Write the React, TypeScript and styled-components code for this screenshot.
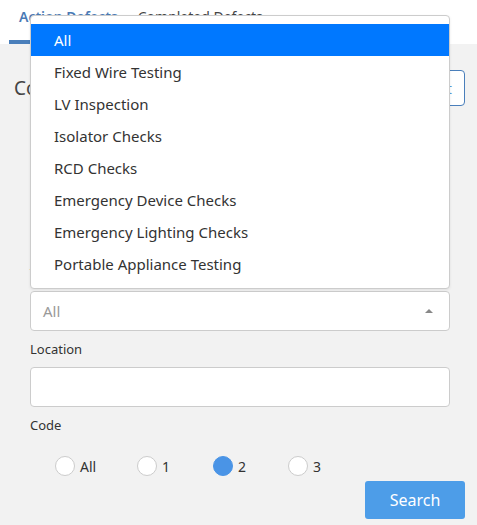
import React from "react";
import styled, { createGlobalStyle } from "styled-components";

const Global = createGlobalStyle`
  html, body { margin: 0; padding: 0; }
  body {
    background: #f2f2f2;
    font-family: "Noto Sans", "Open Sans", sans-serif;
    color: #333;
  }
  * { box-sizing: border-box; }
`;

const Page = styled.div`
  position: relative;
  width: 477px;
  min-height: 525px;
  background: #f2f2f2;
`;

const TabBar = styled.div`
  display: flex;
  height: 44px;
  background: #fff;
  padding-left: 9px;
`;

const Tab = styled.div<{ $active?: boolean }>`
  padding: 7px 10px 0;
  font-size: 14px;
  line-height: 20px;
  font-weight: ${(p) => (p.$active ? 600 : 400)};
  color: ${(p) => (p.$active ? "#4a7ab5" : "#444")};
  border-bottom: 4px solid ${(p) => (p.$active ? "#4a7fbb" : "transparent")};
`;

const Content = styled.div`
  padding: 26px 12px 0 14px;
`;

const HeaderRow = styled.div`
  display: flex;
  align-items: center;
  justify-content: space-between;
  height: 36px;
  margin-bottom: 5px;
`;

const Heading = styled.h2`
  margin: 0;
  font-size: 19px;
  font-weight: 400;
  color: #444;
`;

const OutlineButton = styled.button`
  height: 36px;
  padding: 0 12px;
  border: 1px solid #4a7fbb;
  border-radius: 4px;
  background: #fff;
  color: #5b9bd5;
  font-family: inherit;
  font-size: 15px;
`;

const Form = styled.div`
  display: flex;
  flex-direction: column;
  padding: 0 15px 0 16px;
`;

const Field = styled.div`
  display: flex;
  flex-direction: column;
  margin-bottom: 8px;
`;

const Label = styled.label`
  font-size: 13px;
  line-height: 20px;
  color: #333;
  margin-bottom: 8px;
`;

const Input = styled.div`
  height: 40px;
  background: #fff;
  border: 1px solid #ccc;
  border-radius: 4px;
`;

const SelectBox = styled.div`
  display: flex;
  align-items: center;
  justify-content: space-between;
  height: 40px;
  padding: 0 16px 0 12px;
  background: #fff;
  border: 1px solid #ccc;
  border-radius: 4px;
  font-size: 15px;
  color: #999;
`;

const Caret = styled.span`
  width: 0;
  height: 0;
  border-left: 4px solid transparent;
  border-right: 4px solid transparent;
  border-bottom: 4px solid #888;
`;

const RadioRow = styled.div`
  display: grid;
  grid-template-columns: 82px 76px 75px auto;
  padding-left: 25px;
  margin-top: 13px;
`;

const RadioItem = styled.div`
  display: flex;
  align-items: center;
  gap: 5px;
  font-size: 14px;
  color: #333;
  height: 20px;
`;

const RadioCircle = styled.span<{ $checked?: boolean }>`
  width: 20px;
  height: 20px;
  border-radius: 50%;
  background: ${(p) => (p.$checked ? "#4a94e6" : "#fff")};
  border: 1px solid ${(p) => (p.$checked ? "#4a94e6" : "#ccc")};
`;

const Actions = styled.div`
  display: flex;
  justify-content: flex-end;
  margin: 5px -15px 0 0;
`;

const PrimaryButton = styled.button`
  width: 100px;
  height: 38px;
  border: none;
  border-radius: 3px;
  background: #4d9de8;
  color: #fff;
  font-family: inherit;
  font-size: 16px;
`;

const Menu = styled.ul`
  position: absolute;
  left: 30px;
  top: 15px;
  width: 420px;
  margin: 0;
  padding: 8px 0 8px;
  list-style: none;
  background: #fff;
  border: 1px solid #ccc;
  border-radius: 4px;
  box-shadow: 0 1px 3px rgba(0, 0, 0, 0.08);
`;

const MenuItem = styled.li<{ $active?: boolean }>`
  height: 32px;
  display: flex;
  align-items: center;
  padding-left: 23px;
  font-size: 15px;
  background: ${(p) => (p.$active ? "#0078ff" : "transparent")};
  color: ${(p) => (p.$active ? "#fff" : "#333")};
`;

const options = [
  "All",
  "Fixed Wire Testing",
  "LV Inspection",
  "Isolator Checks",
  "RCD Checks",
  "Emergency Device Checks",
  "Emergency Lighting Checks",
  "Portable Appliance Testing",
];

const codes = ["All", "1", "2", "3"];

export default function App() {
  return (
    <>
      <Global />
      <Page>
        <TabBar>
          <Tab $active>Action Defects</Tab>
          <Tab>Completed Defects</Tab>
        </TabBar>
        <Content>
          <HeaderRow>
            <Heading>Conditions</Heading>
            <OutlineButton>Reset</OutlineButton>
          </HeaderRow>
          <Form>
            <Field>
              <Label>Site</Label>
              <Input />
            </Field>
            <Field>
              <Label>Building</Label>
              <Input />
            </Field>
            <Field>
              <Label>Type</Label>
              <SelectBox>
                <span>All</span>
                <Caret />
              </SelectBox>
            </Field>
            <Field>
              <Label>Location</Label>
              <Input />
            </Field>
            <Label>Code</Label>
            <RadioRow>
              {codes.map((c) => (
                <RadioItem key={c}>
                  <RadioCircle $checked={c === "2"} />
                  {c}
                </RadioItem>
              ))}
            </RadioRow>
            <Actions>
              <PrimaryButton>Search</PrimaryButton>
            </Actions>
          </Form>
        </Content>
        <Menu>
          {options.map((o, i) => (
            <MenuItem key={o} $active={i === 0}>
              {o}
            </MenuItem>
          ))}
        </Menu>
      </Page>
    </>
  );
}
